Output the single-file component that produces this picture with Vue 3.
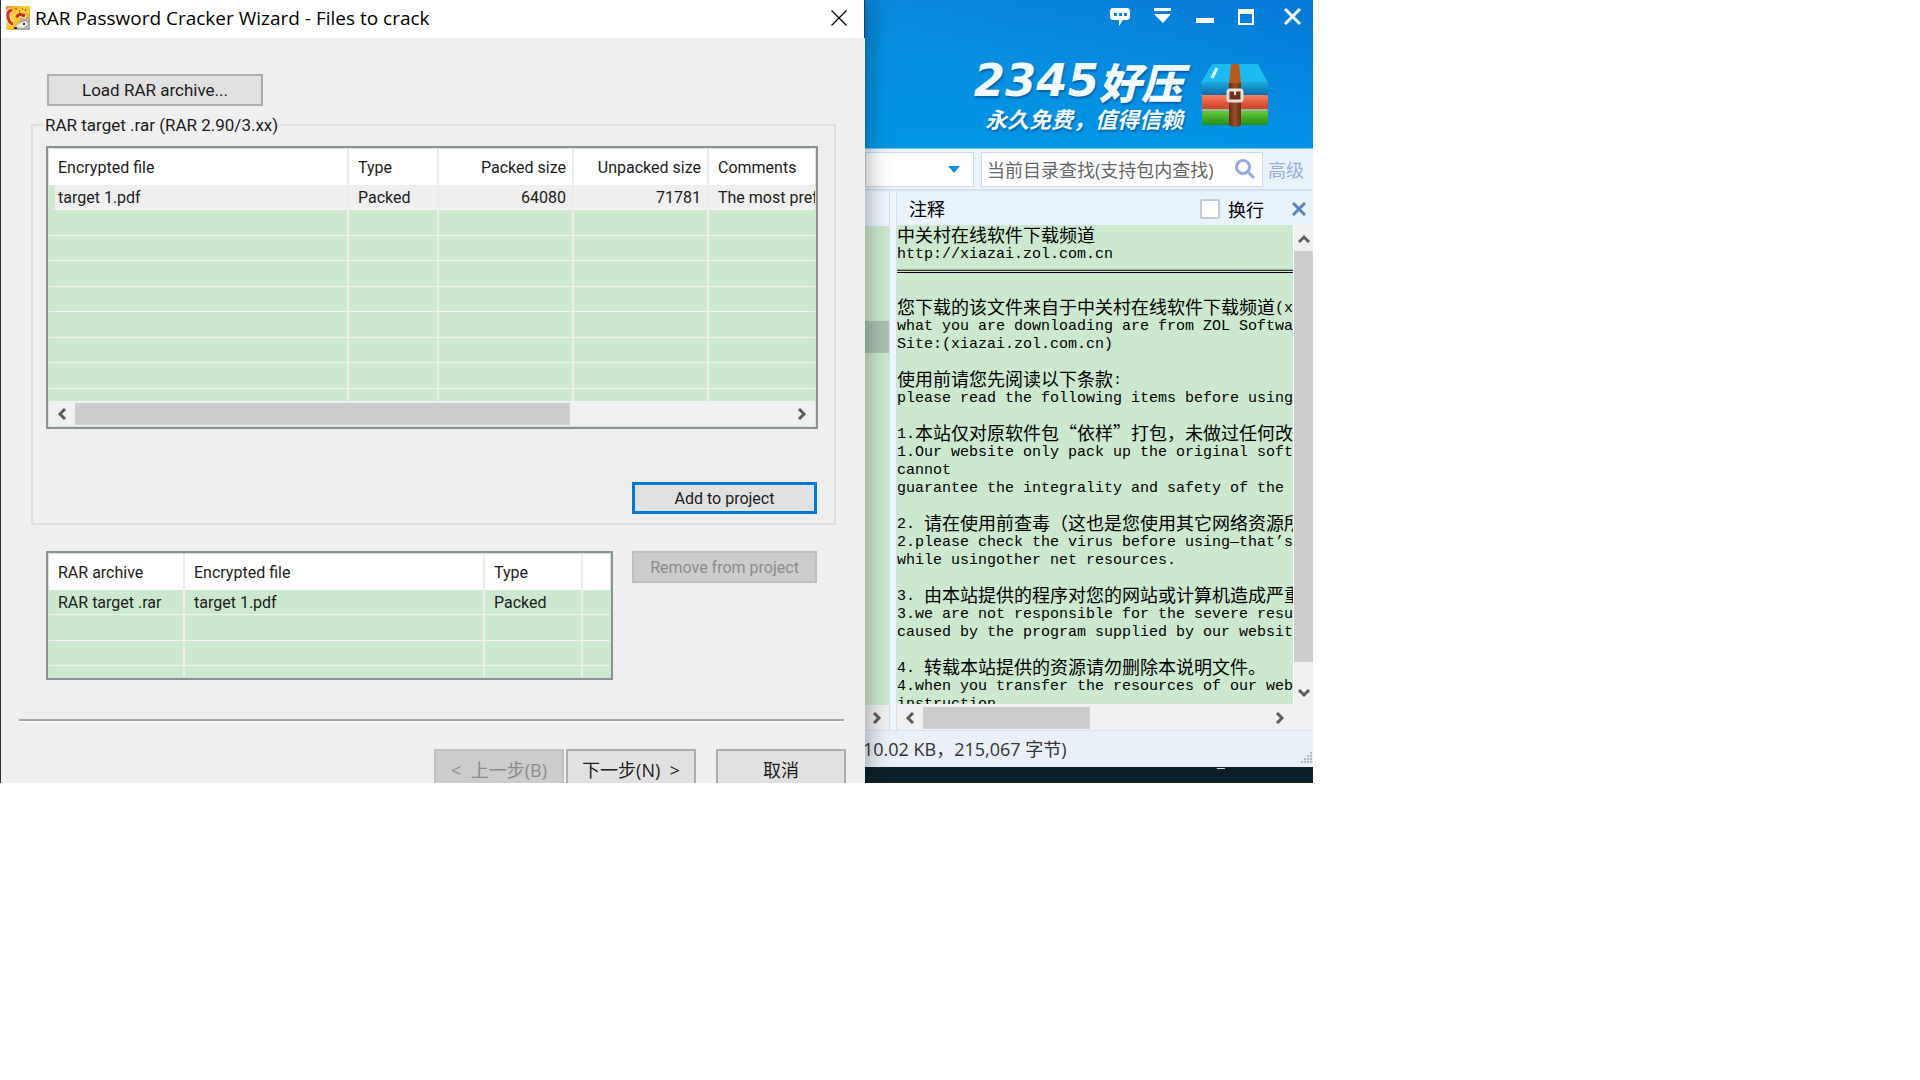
<script setup>
const fileRows = [
  { file: 'target 1.pdf', type: 'Packed', packed: '64080', unpacked: '71781', comments: 'The most preferable' },
]
const projectRows = [
  { archive: 'RAR target .rar', file: 'target 1.pdf', type: 'Packed' },
]

const note = [
  '中关村在线软件下载频道',
  'http://xiazai.zol.com.cn',
  '═'.repeat(60),
  '',
  '您下载的该文件来自于中关村在线软件下载频道(xiazai.zol.com.cn)',
  'what you are downloading are from ZOL Software',
  'Site:(xiazai.zol.com.cn)',
  '',
  '使用前请您先阅读以下条款:',
  'please read the following items before using',
  '',
  '1.本站仅对原软件包“依样”打包，未做过任何改动',
  '1.Our website only pack up the original software',
  'cannot',
  'guarantee the integrality and safety of the',
  '',
  '2. 请在使用前查毒（这也是您使用其它网络资源所',
  '2.please check the virus before using—that’s',
  'while usingother net resources.',
  '',
  '3. 由本站提供的程序对您的网站或计算机造成严重',
  '3.we are not responsible for the severe result',
  'caused by the program supplied by our website',
  '',
  '4. 转载本站提供的资源请勿删除本说明文件。',
  '4.when you transfer the resources of our website',
  'instruction',
]

// Latin runs are set at half the width of the Chinese characters
const lines = note.map((line) =>
  (line.match(/[\x20-\x7e—’═]+|[^\x20-\x7e—’═]+/g) || []).map((text) => ({
    text,
    latin: /^[\x20-\x7e—’═]/.test(text),
  })),
)
</script>

<template>
  <div class="page">
    <main class="desktop">
      <section class="wizard">
        <header class="titlebar">
          <svg class="app-icon" width="24" height="24" viewBox="0 0 24 24" aria-hidden="true">
            <defs>
              <linearGradient id="sun" x1="0" y1="0" x2="1" y2="1">
                <stop offset="0" stop-color="#f08a10" />
                <stop offset="0.4" stop-color="#ffd838" />
                <stop offset="1" stop-color="#e07818" />
              </linearGradient>
            </defs>
            <rect width="24" height="24" fill="url(#sun)" />
            <path d="M6 4Q1 5 2 11T7 18" fill="none" stroke="#fff0d0" stroke-width="5" />
            <path d="M6 4Q1 5 2 11T7 18" fill="none" stroke="#d3301a" stroke-width="3" />
            <path d="M10 11l4-3 6 3" fill="none" stroke="#fff0d0" stroke-width="4" />
            <path d="M10 11l4-3 5 2" fill="none" stroke="#c52e1a" stroke-width="3" />
            <path d="M8 22l6-6 1-4 3 2 4-4 2 7v7H10z" fill="#a9aaa8" />
            <path d="M9 21l5-4 6-2 2 4-5 3z" fill="#ecebe6" />
            <path d="M17 17h2v2h-2zM8 21h3v2H8z" fill="#333" />
            <path d="M13 4l1 2M16 2l1 2M20 3l-1 2M10 2v2" stroke="#8b4b08" stroke-width="1" />
          </svg>
          <h1>RAR Password Cracker Wizard - Files to crack</h1>
          <button class="close" aria-label="Close">
            <svg width="16" height="16" viewBox="0 0 16 16"><path d="M.5.5l15 15M15.5.5l-15 15" stroke="#000" stroke-width="1.2" /></svg>
          </button>
        </header>

        <div class="wizard-body">
          <button class="btn load">Load RAR archive...</button>

          <fieldset>
            <legend>RAR target .rar (RAR 2.90/3.xx)</legend>
            <div class="list files">
              <div class="rows">
                <table>
                  <colgroup><col class="c-file" /><col class="c-type" /><col class="c-size" /><col class="c-size" /><col /></colgroup>
                  <thead>
                    <tr><th>Encrypted file</th><th>Type</th><th class="num">Packed size</th><th class="num">Unpacked size</th><th>Comments</th></tr>
                  </thead>
                  <tbody>
                    <tr v-for="r in fileRows" :key="r.file" class="selected">
                      <td>{{ r.file }}</td><td>{{ r.type }}</td><td class="num">{{ r.packed }}</td><td class="num">{{ r.unpacked }}</td><td>{{ r.comments }}</td>
                    </tr>
                    <tr v-for="n in 8" :key="n"><td></td><td></td><td></td><td></td><td></td></tr>
                  </tbody>
                </table>
              </div>
              <div class="hscroll">
                <svg class="arrow" width="10" height="12" viewBox="0 0 10 12"><path d="M8 1L3 6l5 5" /></svg>
                <i class="thumb wide"></i>
                <svg class="arrow end" width="10" height="12" viewBox="0 0 10 12"><path d="M2 1l5 5-5 5" /></svg>
              </div>
            </div>
            <button class="btn default side">Add to project</button>
          </fieldset>

          <div class="project">
            <div class="list chosen">
              <div class="rows">
                <table>
                  <colgroup><col class="c-archive" /><col class="c-file" /><col class="c-kind" /><col /></colgroup>
                  <thead>
                    <tr><th>RAR archive</th><th>Encrypted file</th><th>Type</th><th></th></tr>
                  </thead>
                  <tbody>
                    <tr v-for="r in projectRows" :key="r.archive"><td>{{ r.archive }}</td><td>{{ r.file }}</td><td>{{ r.type }}</td><td></td></tr>
                    <tr v-for="n in 3" :key="n"><td></td><td></td><td></td><td></td></tr>
                  </tbody>
                </table>
              </div>
            </div>
            <button class="btn side" disabled>Remove from project</button>
          </div>

          <hr />
          <footer class="nav">
            <button class="btn" disabled>&lt;&nbsp; 上一步(B)</button>
            <button class="btn">下一步(N)&nbsp; &gt;</button>
            <button class="btn cancel">取消</button>
          </footer>
        </div>
      </section>

      <section class="zip">
        <header class="banner">
          <div class="controls">
            <button aria-label="反馈">
              <svg width="20" height="18" viewBox="0 0 20 18"><path d="M2 0h16l2 2v8l-2 2h-5l-4 6V12H2l-2-2V2z" fill="#fff" /><path d="M4 5h3v3H4zM9 5h3v3H9zM14 5h3v3h-3z" fill="#0a82d9" /></svg>
            </button>
            <button aria-label="菜单">
              <svg width="18" height="18" viewBox="0 0 18 18"><path d="M0 0h17v3H0zM0 6h17l-8 9z" fill="#fff" /></svg>
            </button>
            <button aria-label="最小化">
              <svg width="18" height="18" viewBox="0 0 18 18"><path d="M0 10h18v5H0z" fill="#fff" /></svg>
            </button>
            <button aria-label="最大化">
              <svg width="16" height="18" viewBox="0 0 16 18"><path d="M0 1h16v16H0zM2 6v9h12V6z" fill="#fff" fill-rule="evenodd" /></svg>
            </button>
            <button class="quit" aria-label="关闭">
              <svg width="18" height="18" viewBox="0 0 18 18"><path d="M1 1l15 15M16 1L1 16" stroke="#fff" stroke-width="3" /></svg>
            </button>
          </div>
          <div class="brand">
            <div class="words">
              <div class="name"><span class="digits">2345</span><span class="hanzi">好压</span></div>
              <div class="slogan">永久免费，值得信赖</div>
            </div>
            <svg width="70" height="66" viewBox="0 0 70 66" aria-hidden="true">
              <defs>
                <linearGradient id="front" x1="0" y1="0" x2="0" y2="1"><stop offset="0" stop-color="#21a8e0" /><stop offset="1" stop-color="#066ca8" /></linearGradient>
                <linearGradient id="red" x1="0" y1="0" x2="0" y2="1"><stop offset="0" stop-color="#f78060" /><stop offset="1" stop-color="#cc3a20" /></linearGradient>
                <linearGradient id="green" x1="0" y1="0" x2="0" y2="1"><stop offset="0" stop-color="#62cc3c" /><stop offset="1" stop-color="#258c12" /></linearGradient>
                <linearGradient id="strap" x1="0" y1="0" x2="1" y2="0"><stop offset="0" stop-color="#6b2c14" /><stop offset="0.5" stop-color="#98502c" /><stop offset="1" stop-color="#6b2c14" /></linearGradient>
              </defs>
              <path d="M12 1h46l10 19v3H1v-3z" fill="#1cbcf3" />
              <path d="M1 19h67v10l-1 3H2l-1-3z" fill="url(#front)" />
              <rect x="2" y="32" width="66" height="15" rx="1" fill="url(#red)" />
              <rect x="2" y="48" width="66" height="14" rx="2" fill="url(#green)" />
              <path d="M2 47h66" stroke="#9bb9a4" stroke-width="2" />
              <path d="M31 1h8l2 19H29z" fill="#b55c1f" />
              <path d="M29 20h12v42q-6 4-12 0z" fill="url(#strap)" />
              <rect x="28" y="27" width="14" height="11" rx="2" fill="#713019" stroke="#e9e1d8" stroke-width="3" />
              <path d="M35 26v6" stroke="#f0e8e0" stroke-width="2" />
              <path d="M17 5l-5 10" stroke="#e6faff" stroke-width="3" />
            </svg>
          </div>
        </header>

        <div class="toolbar">
          <div class="address"><svg width="12" height="7" viewBox="0 0 12 7"><path d="M0 0h12L6 7z" fill="#148ee0" /></svg></div>
          <div class="search">
            <input type="text" aria-label="查找" placeholder="当前目录查找(支持包内查找)" />
            <svg width="20" height="20" viewBox="0 0 20 20"><circle cx="8" cy="8" r="6.5" fill="none" stroke="#94abdd" stroke-width="3" /><path d="M13 13l6 6" stroke="#94abdd" stroke-width="3" /></svg>
          </div>
          <a href="#">高级</a>
        </div>

        <div class="panes">
          <div class="tree">
            <div class="tree-head"></div>
            <div class="tree-body"><i></i></div>
            <div class="hscroll"><svg class="arrow" width="10" height="12" viewBox="0 0 10 12"><path d="M2 1l5 5-5 5" /></svg></div>
          </div>
          <div class="comment">
            <div class="comment-head">
              <h2>注释</h2>
              <label><input type="checkbox" />换行</label>
              <button aria-label="关闭注释"><svg width="14" height="14" viewBox="0 0 14 14"><path d="M1 1l12 12M13 1L1 13" stroke="#5a83bd" stroke-width="3" /></svg></button>
            </div>
            <div class="comment-main">
              <div class="text">
                <p v-for="(line, i) in lines" :key="i"><span v-for="(run, j) in line" :key="j" :class="{ latin: run.latin }">{{ run.text }}</span></p>
              </div>
              <div class="vscroll">
                <svg class="arrow" width="12" height="10" viewBox="0 0 12 10"><path d="M1 8l5-5 5 5" /></svg>
                <i></i>
                <svg class="arrow" width="12" height="10" viewBox="0 0 12 10"><path d="M1 2l5 5 5-5" /></svg>
              </div>
            </div>
            <div class="hscroll">
              <svg class="arrow" width="10" height="12" viewBox="0 0 10 12"><path d="M8 1L3 6l5 5" /></svg>
              <i class="thumb short"></i>
              <svg class="arrow end" width="10" height="12" viewBox="0 0 10 12"><path d="M2 1l5 5-5 5" /></svg>
            </div>
          </div>
        </div>

        <footer class="status">
          <span>10.02 KB，215,067 字节)</span>
          <svg width="12" height="12" viewBox="0 0 12 12"><path d="M9 0h2v2H9zM6 3h2v2H6zM9 3h2v2H9zM3 6h2v2H3zM6 6h2v2H6zM9 6h2v2H9zM0 9h2v2H0zM3 9h2v2H3zM6 9h2v2H6zM9 9h2v2H9z" fill="#b4bac2" /></svg>
        </footer>
        <div class="taskbar"><i></i></div>
      </section>
    </main>
  </div>
</template>

<style>
body {
  margin: 0;
  background: #fff;
}
</style>

<style scoped>
* {
  box-sizing: border-box;
}
.page {
  display: grid;
  grid-template-columns: minmax(0, 1313fr) minmax(0, 607fr);
  font-family: Roboto, "Noto Sans CJK SC", sans-serif;
  font-size: 16px;
  color: #1c1c1c;
}
.desktop {
  display: grid;
  grid-template-columns: minmax(0, 865fr) minmax(0, 448fr);
  overflow: hidden;
}
button {
  font: inherit;
  color: inherit;
  padding: 0;
  border: 0;
  background: none;
}
svg {
  display: block;
  flex: none;
}
h1, h2, p {
  margin: 0;
  font-weight: 400;
}

/* wizard window */
.wizard {
  position: relative;
  z-index: 1;
  border-left: 1px solid #26333a;
  background: #efefef;
  box-shadow: 0 0 24px rgba(0, 0, 0, 0.4);
}
.titlebar {
  display: flex;
  align-items: center;
  height: 38px;
  padding: 0 17px 2px 5px;
  border-right: 1px solid #15405f;
  background: #fff;
}
h1 {
  flex: 1;
  margin-left: 5px;
  font: 19px/24px "Open Sans", sans-serif;
  color: #000;
  white-space: nowrap;
}
.wizard-body {
  padding-top: 36px;
}
.btn {
  height: 32px;
  border: 2px solid #adadad;
  background: #e1e1e1;
  white-space: nowrap;
}
.btn:disabled {
  border-color: #bfbfbf;
  background: #ccc;
  color: #8a8a8a;
}
.btn.default {
  border: 3px solid #0078d7;
}
.load {
  display: block;
  width: 216px;
  margin-left: 46px;
  font-size: 17px;
}
.side {
  flex: none;
  width: 185px;
}
fieldset {
  min-width: 0;
  margin: 8px 29px 0 30px;
  padding: 10px 16px 9px 13px;
  border: 2px solid #dfdfdf;
}
legend {
  margin-left: -3px;
  padding: 0 2px;
  font-size: 17px;
  line-height: 22px;
}
fieldset .side {
  display: block;
  margin: 53px 1px 0 auto;
}
.list {
  border: 2px solid #8a9096;
  padding: 1px;
  background: #cce8cf;
}
.files {
  height: 283px;
}
.chosen {
  flex: 1;
  min-width: 0;
  height: 129px;
}
.rows {
  overflow: hidden;
  height: 252px;
}
.chosen .rows {
  height: 123px;
}
table {
  width: 100%;
  table-layout: fixed;
  border-collapse: separate;
  border-spacing: 0;
}
.c-file { width: 300px; }
.c-type { width: 90px; }
.c-size { width: 135px; }
.c-archive { width: 136px; }
.c-kind { width: 98px; }
th, td {
  overflow: hidden;
  padding: 0 8px 0 9px;
  border-right: 2px solid #ececec;
  font-weight: 400;
  text-align: left;
  white-space: nowrap;
}
th {
  height: 36px;
  background: #fff;
}
td {
  height: 25px;
  padding-top: 2px;
  border-bottom: 1px solid #f2f2f2;
  line-height: 22px;
}
tr:nth-child(even) td {
  height: 26px;
}
th:last-child, td:last-child {
  padding-right: 0;
  border-right: 0;
}
.num {
  padding-right: 6px;
  text-align: right;
}
.selected td {
  background: #efefef;
}
.selected td:first-child {
  padding-left: 3px;
  border-left: 6px solid #cce8cf;
}
.hscroll {
  display: flex;
  align-items: center;
  height: 25px;
  padding: 1px 8px;
  background: #f0f0f0;
}
.arrow path {
  fill: none;
  stroke: #5c5c5c;
  stroke-width: 3;
}
.arrow.end {
  margin-left: auto;
}
.thumb {
  height: 22px;
  margin-left: 8px;
  background: #cdcdcd;
}
.wide { width: 66%; }
.short { width: 167px; }
.project {
  display: flex;
  gap: 19px;
  padding: 26px 48px 0 45px;
}
hr {
  height: 3px;
  margin: 39px 21px 27px 18px;
  border: 0;
  border-top: 2px solid #a5a5a5;
  background: #fff;
}
.nav {
  display: flex;
  justify-content: flex-end;
  gap: 2px;
  height: 34px;
  padding-right: 19px;
  overflow: hidden;
}
.nav .btn {
  width: 130px;
  height: 39px;
  font-family: "Open Sans", "Noto Sans CJK SC", sans-serif;
  font-size: 18px;
}
.nav .cancel {
  margin-left: 18px;
}

/* archive manager window */
.zip {
  display: flex;
  flex-direction: column;
  font-family: "Open Sans", "Noto Sans CJK SC", sans-serif;
  font-size: 18px;
}
.banner {
  height: 149px;
  border-bottom: 1px solid #7cc4f0;
  background:
    linear-gradient(to bottom left, rgba(0, 92, 205, 0.35), transparent 60%),
    linear-gradient(#0a8adc, #0295e6);
}
.controls {
  display: flex;
  justify-content: flex-end;
  gap: 24px;
  padding: 8px 11px 0 0;
}
.quit {
  margin-left: 6px;
}
.brand {
  display: flex;
  justify-content: flex-end;
  align-items: flex-start;
  gap: 17px;
  padding: 32px 43px 0 0;
}
.brand svg {
  margin-top: 5px;
}
.words {
  display: flex;
  flex-direction: column;
  align-items: flex-end;
  gap: 2px;
  color: #f0faff;
  font-style: italic;
  text-shadow: 1px 2px 2px rgba(0, 50, 110, 0.5);
  white-space: nowrap;
}
.name {
  display: flex;
  align-items: center;
  height: 46px;
}
.digits {
  font: italic bold 45px/46px "DejaVu Sans", sans-serif;
}
.hanzi {
  font: italic 900 42px/46px "Noto Sans CJK SC", sans-serif;
}
.slogan {
  font: italic bold 22px/24px "Noto Sans CJK SC", sans-serif;
}
.toolbar {
  display: flex;
  align-items: center;
  gap: 7px;
  height: 42px;
  padding: 0 9px 0 0;
  border-bottom: 2px solid #d3e0ee;
  background: #e8f3fc;
}
.address, .search {
  display: flex;
  align-items: center;
  height: 35px;
  border: 1px solid #cbdaf0;
  background: #fff;
}
.address {
  flex: 0 0 109px;
  justify-content: flex-end;
  padding-right: 13px;
}
.search {
  flex: 1;
  min-width: 0;
  padding: 0 7px 0 5px;
}
.search input {
  flex: 1;
  min-width: 0;
  padding: 2px 0 0;
  border: 0;
  outline: 0;
  font: inherit;
}
.search input::placeholder {
  color: #666;
  opacity: 1;
}
.toolbar a {
  margin-left: -2px;
  color: #97addc;
  text-decoration: none;
}
.panes {
  flex: 1;
  display: flex;
  min-height: 0;
  background: #eef5ff;
}
.tree {
  display: flex;
  flex-direction: column;
  flex: 0 0 25px;
  border-right: 1px solid #d2dff0;
}
.tree-head {
  height: 35px;
  background: #eef5ff;
}
.tree-body {
  flex: 1;
  padding-top: 95px;
  background: #cce8cf;
}
.tree-body i {
  display: block;
  height: 32px;
  background: #abc4ae;
}
.tree .hscroll {
  padding: 1px 7px;
}
.comment {
  display: flex;
  flex-direction: column;
  flex: 1;
  min-width: 0;
  margin-left: 6px;
  border-left: 1px solid #d2dff0;
}
.comment-head {
  display: flex;
  align-items: center;
  height: 34px;
  padding: 2px 7px 0 12px;
  background: #e8f3fc;
  color: #000;
}
h2 {
  flex: 1;
  font-size: 18px;
  line-height: 26px;
}
label {
  display: flex;
  align-items: center;
  gap: 8px;
  margin-right: 28px;
}
label input {
  appearance: none;
  width: 20px;
  height: 20px;
  margin: 0;
  border: 2px solid #c2cbd8;
  border-radius: 2px;
  background: #fff;
}
.comment-main {
  flex: 1 1 0;
  display: flex;
  min-height: 479px;
}
.text {
  flex: 1 1 0;
  height: 479px;
  overflow: hidden;
  background: #cce8cf;
  color: #000;
}
.text p {
  height: 18px;
  font: 18px/18px "Noto Sans CJK SC", sans-serif;
  white-space: pre;
}
.text .latin {
  font: 15px/10px "Liberation Mono", monospace;
  vertical-align: 2px;
}
.vscroll {
  display: flex;
  flex-direction: column;
  align-items: center;
  flex: 0 0 20px;
  padding: 9px 0 7px;
  border-left: 1px solid #fff;
  background: #f0f0f0;
}
.vscroll i {
  width: 100%;
  height: 411px;
  margin: 7px 0 auto;
  background: #cdcdcd;
}
.comment .hscroll {
  padding-right: 28px;
}
.status {
  display: flex;
  align-items: center;
  justify-content: space-between;
  height: 37px;
  padding-bottom: 3px;
  border-top: 1px solid #d5e3f2;
  background: #e9f0f8;
  color: #333;
  white-space: nowrap;
}
.status span {
  margin-left: -2px;
}
.status svg {
  align-self: flex-end;
}
.taskbar {
  height: 16px;
  padding: 1px 88px;
  background: #0c2029;
}
.taskbar i {
  display: block;
  width: 8px;
  height: 1px;
  margin-left: auto;
  background: #d8dde0;
}
</style>
